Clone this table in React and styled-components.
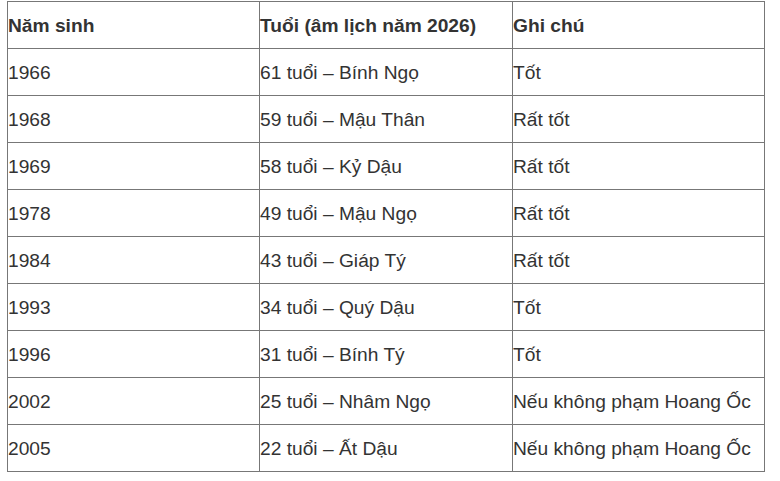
import React from "react";
import styled, { createGlobalStyle } from "styled-components";

const Global = createGlobalStyle`
  html, body { margin: 0; padding: 0; background: #ffffff; }
  body { font-family: "Liberation Sans", Arial, sans-serif; }
`;

const Page = styled.div`
  padding: 1px 0 0 7px;
`;

const Table = styled.table`
  border-collapse: collapse;
  table-layout: fixed;
  width: 758px;
  font-family: "Liberation Sans", Arial, sans-serif;
  font-size: 19.2px;
  color: #333333;
`;

const Row = styled.tr`
  height: 47px;
`;

const Cell = styled.td`
  border: 1px solid #777777;
  padding: 2px 0 0 0;
  vertical-align: middle;
  text-align: left;
  font-weight: ${(p) => (p.$head ? 700 : 400)};
  white-space: nowrap;
`;

const rows = [
  ["1966", "61 tuổi – Bính Ngọ", "Tốt"],
  ["1968", "59 tuổi – Mậu Thân", "Rất tốt"],
  ["1969", "58 tuổi – Kỷ Dậu", "Rất tốt"],
  ["1978", "49 tuổi – Mậu Ngọ", "Rất tốt"],
  ["1984", "43 tuổi – Giáp Tý", "Rất tốt"],
  ["1993", "34 tuổi – Quý Dậu", "Tốt"],
  ["1996", "31 tuổi – Bính Tý", "Tốt"],
  ["2002", "25 tuổi – Nhâm Ngọ", "Nếu không phạm Hoang Ốc"],
  ["2005", "22 tuổi – Ất Dậu", "Nếu không phạm Hoang Ốc"],
];

export default function App() {
  return (
    <>
      <Global />
      <Page>
        <Table>
          <colgroup>
            <col style={{ width: 252 }} />
            <col style={{ width: 253 }} />
            <col style={{ width: 252 }} />
          </colgroup>
          <tbody>
            <Row>
              <Cell $head>Năm sinh</Cell>
              <Cell $head>Tuổi (âm lịch năm 2026)</Cell>
              <Cell $head>Ghi chú</Cell>
            </Row>
            {rows.map((r) => (
              <Row key={r[0]}>
                {r.map((c, i) => (
                  <Cell key={i}>{c}</Cell>
                ))}
              </Row>
            ))}
          </tbody>
        </Table>
      </Page>
    </>
  );
}
